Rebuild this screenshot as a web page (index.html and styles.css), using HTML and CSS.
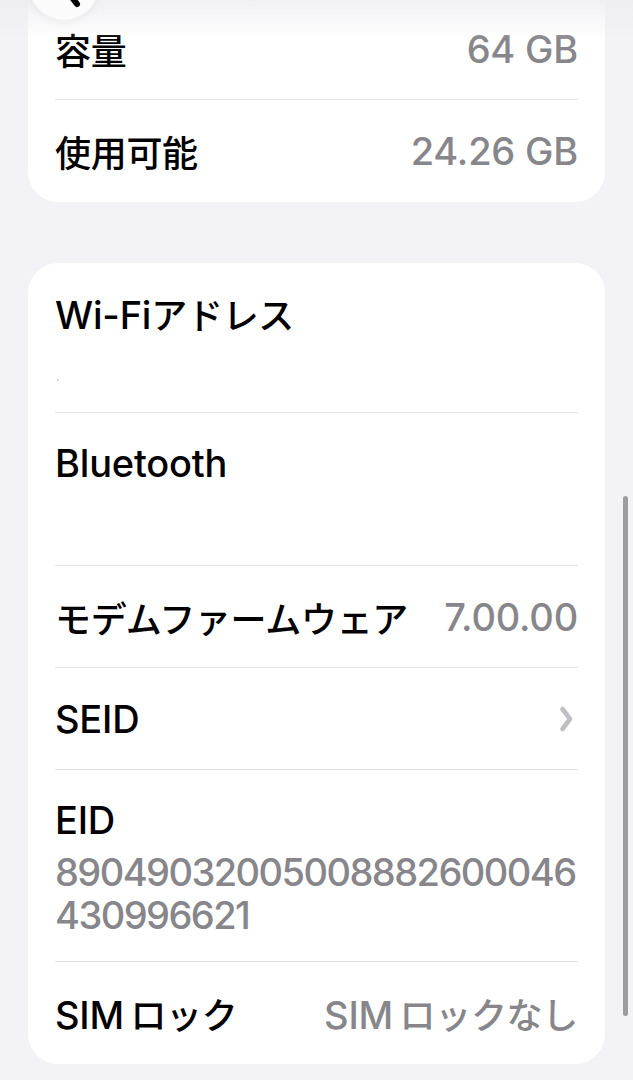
FILE: index.html
```html
<!DOCTYPE html>
<html lang="ja">
<head>
<meta charset="utf-8">
<link rel="stylesheet" href="styles.css">
</head>
<body>
<div class="screen">
  <div class="topfade"></div>
  <div class="back-btn">
    <svg class="back-chev" viewBox="0 0 30 50" width="30" height="50"><path d="M22 4 L6 25 L22 46" fill="none" stroke="#000" stroke-width="6" stroke-linecap="round" stroke-linejoin="round"/></svg>
  </div>

  <section class="card card-top">
    <div class="row">
      <span class="label ja">容量</span>
      <span class="value">64 GB</span>
    </div>
    <div class="row">
      <span class="label ja">使用可能</span>
      <span class="value">24.26 GB</span>
    </div>
  </section>

  <section class="card card-info">
    <div class="row row-stack row-wifi">
      <span class="label">Wi-Fi<span class="ja">アドレス</span></span>
      <span class="sub"><span class="speck"></span></span>
    </div>
    <div class="row row-stack row-bt">
      <span class="label">Bluetooth</span>
      <span class="sub">&nbsp;</span>
    </div>
    <div class="row">
      <span class="label ja">モデムファームウェア</span>
      <span class="value">7.00.00</span>
    </div>
    <div class="row">
      <span class="label">SEID</span>
      <svg class="chev" viewBox="0 0 16 28" width="16" height="28"><path d="M4.5 4 L12 14 L4.5 24" fill="none" stroke="#bfbfc4" stroke-width="4.6" stroke-linecap="round" stroke-linejoin="round"/></svg>
    </div>
    <div class="row row-stack row-eid">
      <span class="label">EID</span>
      <span class="sub digits">89049032005008882600046<br>430996621</span>
    </div>
    <div class="row">
      <span class="label">SIM&#8201;<span class="ja">ロック</span></span>
      <span class="value">SIM&#8201;<span class="ja">ロックなし</span></span>
    </div>
  </section>

  <div class="scrollbar"></div>
</div>
</body>
</html>
```
FILE: styles.css
```css
html, body {
  margin: 0;
  padding: 0;
  background: #f2f2f7;
}
body {
  font-family: Inter, "Noto Sans CJK JP", sans-serif;
  color: #000;
  -webkit-font-smoothing: antialiased;
}
.screen {
  position: relative;
  width: 633px;
  height: 1080px;
  overflow: hidden;
  padding: 0 28px;
  box-sizing: border-box;
}
.topfade {
  position: absolute;
  left: 0;
  right: 0;
  top: 0;
  height: 40px;
  background: linear-gradient(to bottom, rgba(238,238,242,0.85), rgba(255,255,255,0));
  z-index: 2;
  pointer-events: none;
}
.back-btn {
  position: absolute;
  left: 29px;
  top: -50px;
  width: 70px;
  height: 70px;
  border-radius: 50%;
  background: #fbfbfc;
  box-shadow: 0 2px 10px rgba(0,0,0,0.06);
  z-index: 3;
}
.back-chev {
  position: absolute;
  left: 26px;
  top: 8px;
}
.card {
  background: #fff;
  border-radius: 30px;
  padding: 0 27px;
}
.card-top {
  margin-top: -30px;
  padding-top: 28px;
  margin-bottom: 61px;
}
.row {
  display: flex;
  align-items: center;
  justify-content: space-between;
  height: 101px;
  border-bottom: 1.5px solid #e3e3e7;
  font-size: 38px;
  font-weight: 500;
  letter-spacing: -0.2px;
}
.row:last-child {
  border-bottom: none;
  height: 102px;
}
.ja {
  font-family: "Noto Sans CJK JP", sans-serif;
  font-size: 36px;
  letter-spacing: -0.3px;
}
.label {
  white-space: nowrap;
}
.value {
  color: #86868b;
  white-space: nowrap;
}
.row-stack {
  flex-direction: column;
  align-items: flex-start;
  justify-content: flex-start;
  height: auto;
  padding-top: 27px;
  box-sizing: border-box;
}
.row-stack .label {
  line-height: 46px;
}
.row-stack .sub {
  color: #86868b;
  line-height: 43px;
  margin-top: 8px;
}
.digits {
  letter-spacing: -1.55px;
}
.row-wifi { height: 150px; }
.row-bt { height: 153px; }
.row-eid { height: 192px; }
.speck {
  display: inline-block;
  width: 2px;
  height: 2px;
  background: #d8d8dc;
  margin-left: 2px;
}
.chev {
  margin-right: 4px;
}
.scrollbar {
  position: absolute;
  left: 623px;
  top: 496px;
  width: 5px;
  height: 520px;
  border-radius: 3px;
  background: #9c9ca1;
}
```
